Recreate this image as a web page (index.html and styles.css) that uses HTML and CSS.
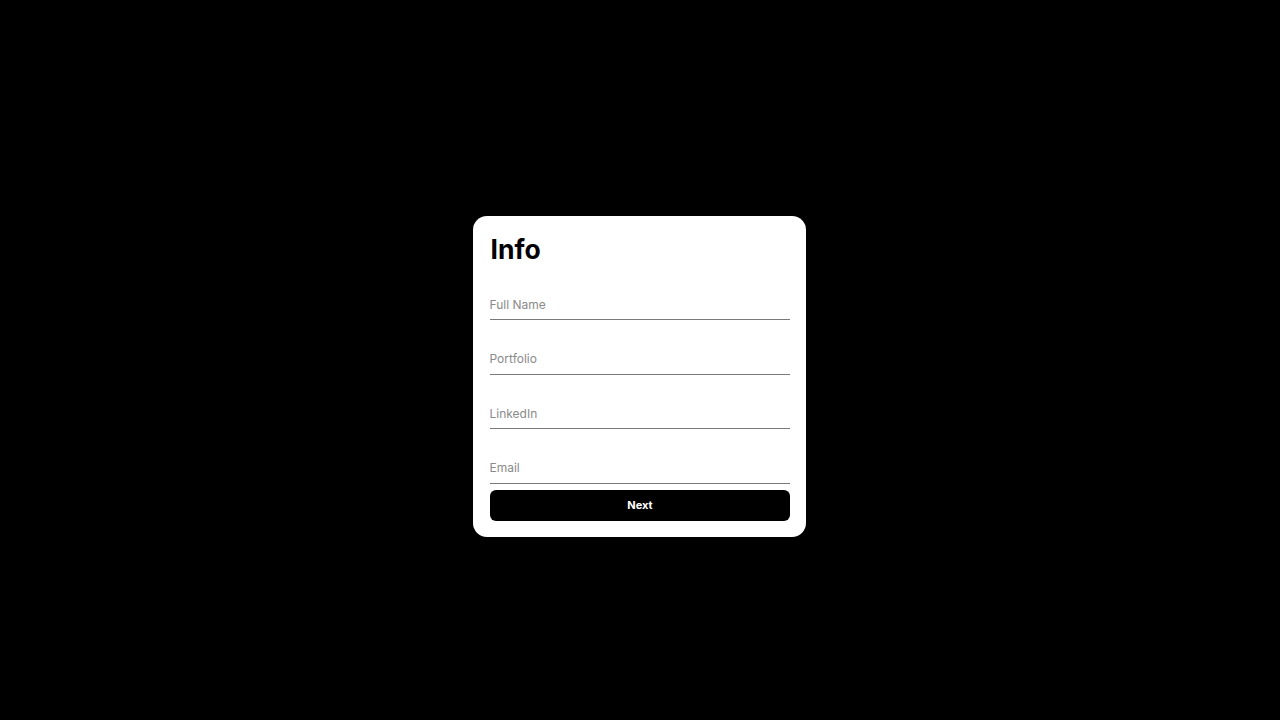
FILE: index.html
```html
<!DOCTYPE html>
<html lang="en">
<head>
<meta charset="utf-8">
<title>Info</title>
<link rel="stylesheet" href="styles.css">
</head>
<body>
<main class="page">
  <form class="card">
    <h1 class="title">Info</h1>
    <div class="fields">
      <input class="field" type="text" placeholder="Full Name">
      <input class="field" type="text" placeholder="Portfolio">
      <input class="field" type="text" placeholder="LinkedIn">
      <input class="field" type="email" placeholder="Email">
    </div>
    <button class="next" type="button">Next</button>
  </form>
</main>
</body>
</html>
```

FILE: styles.css
```css
html, body {
  margin: 0;
  padding: 0;
  background: #000;
  font-family: Inter, "Noto Sans", "Liberation Sans", sans-serif;
}
.page {
  display: flex;
  justify-content: center;
  align-items: flex-start;
  padding-top: 216px;
  min-height: 720px;
  box-sizing: border-box;
}
.card {
  width: 300px;
  background: #fff;
  border-radius: 14px;
  padding: 16px 16.5px 16px 16.5px;
  display: flex;
  flex-direction: column;
  margin-left: -1px;
}
.title {
  margin: 0;
  padding-left: 1px;
  font-size: 26.5px;
  line-height: 34px;
  font-weight: 700;
  color: #000;
}
.fields {
  display: flex;
  flex-direction: column;
  gap: 22.5px;
  margin-top: 22px;
}
.field {
  box-sizing: border-box;
  height: 32px;
  width: 100%;
  border: none;
  border-bottom: 1.5px solid #7a7a7a;
  padding: 1px 0 0 0;
  outline: none;
  font-family: inherit;
  font-size: 12px;
  color: #000;
  background: transparent;
}
.field::placeholder {
  color: #8a8a8a;
}
.next {
  margin-top: 6.5px;
  height: 31px;
  width: 100%;
  border: none;
  border-radius: 6px;
  background: #000;
  color: #fff;
  font-family: inherit;
  font-size: 11px;
  font-weight: 700;
  padding: 0 0 1px 1px;
  cursor: pointer;
}
```
